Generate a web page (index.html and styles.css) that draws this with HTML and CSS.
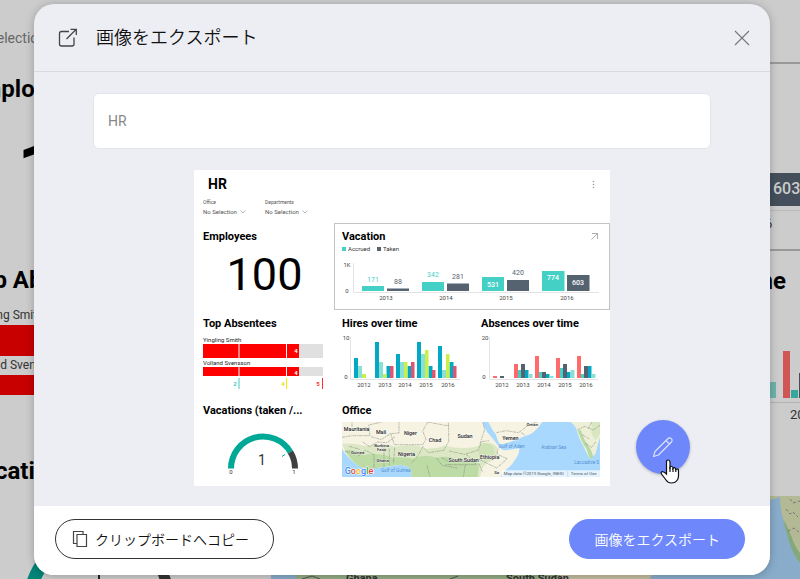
FILE: index.html
```html
<!DOCTYPE html>
<html lang="ja">
<head>
<meta charset="utf-8">
<meta name="viewport" content="width=device-width, initial-scale=1">
<title>画像をエクスポート</title>
<link rel="stylesheet" href="styles.css">
</head>
<body>
<div class="stage">
  <div class="backdrop" aria-hidden="true">
    <div class="back-left">
      <p class="back-filter">No Selection</p>
      <h2 class="back-title">Employees</h2>
      <p class="back-count">100</p>
      <h2 class="back-title">Top Absentees</h2>
      <p class="back-name">Yingling Smith</p>
      <div class="back-bar back-bar-tall"></div>
      <p class="back-name">Volland Svensson</p>
      <div class="back-bar"></div>
      <h2 class="back-title back-title-last">Vacations</h2>
      <svg class="back-gauge" viewBox="0 490 271 89" width="271" height="89">
        <path d="M30 600A69 69 0 0 1 159 568" fill="none" stroke="#008577" stroke-width="13"/>
        <path d="M158 574l10 -3 5 12h-12z" fill="#333"/>
        <path d="M99 574v8" stroke="#222" stroke-width="2"/>
      </svg>
    </div>
    <div class="back-right">
      <div class="back-vacation">
        <svg viewBox="740 64 60 185" width="60" height="185">
          <rect x="740" y="173" width="60" height="33" fill="#444f5b"/>
          <path d="M740 210.500H800" stroke="#bbb" stroke-width="1"/>
          <text x="773" y="194" font-size="16" font-weight="500" fill="#ccc">603</text>
          <text x="765" y="228" font-size="13" fill="#333">6</text>
        </svg>
      </div>
      <h2 class="back-title back-time">time</h2>
      <svg viewBox="740 294 60 201" width="60" height="201">
        <path d="M760 381h16v16h-16z" fill="#6db3aa"/>
        <path d="M783 350h7v47h-7z" fill="#d05555"/>
        <path d="M791 389h7v8h-7z" fill="#36a79f"/>
        <path d="M799 372h7v25h-7z" fill="#444f5b"/>
        <path d="M740 401.500H800" stroke="#b4b4b4"/>
        <text x="790" y="418" font-size="13" fill="#333">2016</text>
      </svg>
      <svg class="back-map" viewBox="271 495 529 84" preserveAspectRatio="xMaxYMax slice">
        <rect x="271" y="495" width="529" height="84" fill="#88acca"/>
        <path d="M298 579L294 574H650V579z" fill="#94ad85"/>
        <path d="M560 574h92l-3 5h-89z" fill="#c2bd9f"/>
        <path d="M770 495h11l-4 2-7 2zM780 495h20v67c-8-10-12-30-17-44c-2-8-3-15-3-23z" fill="#b4b995"/>
        <path d="M783 518c4 15 8 34 17 44v-10c-7-8-9-22-17-34z" fill="#85a87a"/>
        <path d="M786 508l4 5 3-2 5 5M788 530l6-3 6 5M790 498l3 4 7-2" fill="none" stroke="#777" stroke-dasharray="3 2"/>
        <path d="M302 578l10-3 8 3M450 578l8-3" fill="none" stroke="#555"/>
        <text x="346" y="581" font-size="11" font-weight="700" fill="#333">Ghana</text>
        <text x="506" y="581" font-size="11" font-weight="700" fill="#333">South Sudan</text>
      </svg>
    </div>
  </div>

  <main class="dialog" role="dialog" aria-labelledby="dialog-title">
    <header class="dialog-head">
      <svg class="export-icon" viewBox="0 0 20 20" width="20" height="20" fill="none" stroke="#444" stroke-width="1.300">
        <path d="M11 3.500H3.500q-2 0-2 2V16q0 2 2 2H14q2 0 2-2V9.500M8.500 11L18 1.500M12.500 1.300H18.300V7"/>
      </svg>
      <h1 id="dialog-title">画像をエクスポート</h1>
      <button class="close" type="button" aria-label="閉じる">
        <svg viewBox="0 0 16 16" width="16" height="16" stroke="#777" stroke-width="1.100"><path d="M1 1L15 15M15 1L1 15"/></svg>
      </button>
    </header>

    <section class="dialog-body">
      <input class="name" type="text" value="HR" aria-label="名前">
      <div class="preview-row">
        <article class="preview">
          <header class="dash-head">
            <div class="dash-top">
              <h2>HR</h2>
              <svg viewBox="0 0 3 9" width="3" height="9" fill="#999"><circle cx="1.500" cy="1.500" r=".8"/><circle cx="1.500" cy="4.500" r=".8"/><circle cx="1.500" cy="7.500" r=".8"/></svg>
            </div>
            <div class="filters">
              <div class="filter"><p>Office</p><p class="picked">No Selection <svg viewBox="0 0 6 4" width="6" height="4" fill="none" stroke="#999" stroke-width=".7"><path d="M.5 .5L3 3L5.500 .5"/></svg></p></div>
              <div class="filter"><p>Departments</p><p class="picked">No Selection <svg viewBox="0 0 6 4" width="6" height="4" fill="none" stroke="#999" stroke-width=".7"><path d="M.5 .5L3 3L5.500 .5"/></svg></p></div>
            </div>
          </header>
          <div class="widgets">
            <section class="widget">
              <h3>Employees</h3>
              <p class="count">100</p>
            </section>

            <section class="widget wide framed">
              <div class="widget-top">
                <h3>Vacation</h3>
                <svg viewBox="0 0 7 7" width="7" height="7" fill="none" stroke="#999" stroke-width=".8"><path d="M.5 6.500L6.500 .5M1 .5H6.500V6"/></svg>
              </div>
              <ul class="legend"><li class="accrued">Accrued</li><li class="taken">Taken</li></ul>
              <svg class="chart" viewBox="342 254 260 50">
                <path d="M353.500 262V291.500H599" fill="none" stroke="#e4e4e4"/>
                <g fill="#45d0c6"><path d="M362 285h22v5h-22zM422 281h22v9h-22zM482 276h22v14h-22zM542 270h22.500v20h-22.500z"/></g>
                <g fill="#556270"><path d="M387 287.500h22v2.500h-22zM447 282.500h22v7.500h-22zM507 279h22v11h-22zM567 274h22.500v16h-22.500z"/></g>
                <g font-size="7" text-anchor="middle" fill="#45d0c6"><text x="373" y="281">171</text><text x="433" y="276">342</text></g>
                <g font-size="7" text-anchor="middle" fill="#556270"><text x="398" y="283">88</text><text x="458" y="278">281</text><text x="518" y="274">420</text></g>
                <g font-size="7" font-weight="500" text-anchor="middle" fill="#fff"><text x="493" y="286">531</text><text x="553" y="279">774</text><text x="578" y="284">603</text></g>
                <g font-size="6" text-anchor="middle" fill="#444"><text x="347" y="266">1K</text><text x="347" y="292">0</text><text x="386" y="299">2013</text><text x="446" y="299">2014</text><text x="506" y="299">2015</text><text x="567" y="299">2016</text></g>
              </svg>
            </section>

            <section class="widget">
              <h3>Top Absentees</h3>
              <svg class="chart" viewBox="203 329 123 65">
                <path d="M203 344h120v14h-120zM203 367h120v9h-120z" fill="#e0e0e0"/>
                <path d="M203 344h96v14h-96zM203 367h96v9h-96z" fill="#f00"/>
                <path d="M239 344v32M286.500 344v32" stroke="#fff"/>
                <path d="M239 378v11" stroke="#45c9bf"/><path d="M286.500 378v11" stroke="#f1ee00"/><path d="M322.500 378v11" stroke="#ff3030"/>
                <g font-size="6" fill="#222"><text x="203" y="342">Yingling Smith</text><text x="203" y="365">Volland Svensson</text></g>
                <g font-size="6" font-weight="700" text-anchor="middle"><text x="296" y="353" fill="#fff">4</text><text x="296" y="375" fill="#fff">4</text><text x="235" y="386" fill="#45c9bf">2</text><text x="283" y="386" fill="#e4df00">4</text><text x="318" y="386" fill="#ff3030">5</text></g>
              </svg>
            </section>

            <section class="widget">
              <h3>Hires over time</h3>
              <svg class="chart" viewBox="342 329 123 65">
                <path d="M350.500 337V379.500H460" fill="none" stroke="#e4e4e4"/>
                <g fill="#03a8c5"><path d="M354 358h4v20h-4zM375 342h4v36h-4zM396 354h4v24h-4zM417 342h4v36h-4zM438 346h4v32h-4z"/><path d="M386.500 366h4v12h-4zM407.500 366h4v12h-4zM428.500 366h4v12h-4zM449.500 362h4v16h-4z"/></g>
                <path d="M358 366h4v12h-4zM379 362h4v16h-4zM400 362h4v16h-4zM421 354h4v24h-4zM442 370h4v8h-4z" fill="#8be0d6"/>
                <path d="M362 374h4v4h-4zM383 374h3.500v4h-3.500zM404 362h3.500v16h-3.500zM425 350h3.500v28h-3.500zM446 354h3.500v24h-3.500z" fill="#c8f04b"/>
                <path d="M390 366h3.500v12h-3.500zM411 362h3.500v16h-3.500zM432 370h3.500v8h-3.500zM453 366h3.500v12h-3.500z" fill="#dc5573"/>
                <g font-size="6" text-anchor="middle" fill="#444"><text x="346" y="340">10</text><text x="346" y="379">0</text><text x="364" y="387">2012</text><text x="385" y="387">2013</text><text x="405" y="387">2014</text><text x="426" y="387">2015</text><text x="448" y="387">2016</text></g>
              </svg>
            </section>

            <section class="widget">
              <h3>Absences over time</h3>
              <svg class="chart" viewBox="481 329 121 65">
                <path d="M489.500 337V379.500H598" fill="none" stroke="#e4e4e4"/>
                <path d="M493 376h4v2h-4zM514 364h4v14h-4zM535 356h4v22h-4zM556 358h4v20h-4zM577 356h4v22h-4z" fill="#ff6b6b"/>
                <path d="M518 370h3.500v8h-3.500zM539 372h3.500v6h-3.500zM560 368h3.500v10h-3.500zM581 374h3.500v4h-3.500z" fill="#45d0c6"/>
                <path d="M500 376h4v2h-4zM521 364h4v14h-4zM542 372h4v6h-4zM563 364h4v14h-4zM584 366h4v12h-4z" fill="#556270"/>
                <path d="M525 370h3.500v8h-3.500zM546 374h3.500v4h-3.500zM567 372h3.500v6h-3.500zM588 366h3.500v12h-3.500z" fill="#03a8c5"/>
                <path d="M528.500 374h4v4h-4zM549.500 376h4v2h-4zM570.500 370h4v8h-4zM591.500 374h4v4h-4z" fill="#8be0d6"/>
                <g font-size="6" text-anchor="middle" fill="#444"><text x="485" y="340">20</text><text x="484" y="379">0</text><text x="502" y="387">2012</text><text x="523" y="387">2013</text><text x="544" y="387">2014</text><text x="565" y="387">2015</text><text x="586" y="387">2016</text></g>
              </svg>
            </section>

            <section class="widget">
              <h3>Vacations (taken /...</h3>
              <svg class="chart" viewBox="203 416 123 64">
                <path d="M231 468.500A32 32 0 0 1 290.400 452" fill="none" stroke="#00a896" stroke-width="6"/>
                <path d="M290.400 452A32 32 0 0 1 295 468.500" fill="none" stroke="#404040" stroke-width="6"/>
                <path d="M282 456.500l3-2" stroke="#00a896"/>
                <g text-anchor="middle" fill="#333"><text x="262" y="465" font-size="14">1</text><text x="231" y="474" font-size="6">0</text><text x="294" y="474" font-size="6">1</text></g>
              </svg>
            </section>

            <section class="widget wide map">
              <h3>Office</h3>
              <svg class="chart" viewBox="21 66 774 165">
                <rect x="21" y="66" width="774" height="165" fill="#a9d8ff"/>
                <path d="M21 66H443Q448 85 456 96L470 112Q481 126 491 139Q498 150 510 151L553 145Q553 162 542 177Q530 198 509 212L497 231H231L227 206Q212 194 195 194L165 199Q130 203 103 207Q75 203 58 188L39 171Q29 160 21 146z" fill="#f7f3e3"/>
                <path d="M21 132Q50 128 90 138Q150 126 180 140Q240 128 265 145Q300 148 330 137Q380 150 435 138Q465 120 484 139Q491 160 478 180Q455 185 440 207L435 231H231L227 206Q212 194 195 194L103 207Q75 203 58 188L39 171z" fill="#dce8c5"/>
                <path d="M28 151Q60 145 84 165Q130 157 173 173Q202 170 236 176Q270 159 303 174Q340 164 366 180Q410 174 432 192L428 231H231L227 206Q212 194 195 194L103 207Q75 203 58 188z" fill="#bddba5"/>
                <path d="M430 137Q450 118 474 139L480 171Q459 190 432 178z" fill="#cfe2b6"/>
                <path d="M460 66H622Q615 78 605 87Q590 104 570 108Q548 119 523 127L495 134Q486 118 483 104Q470 88 460 66z" fill="#f7f3e3"/>
                <path d="M707 66H795V112Q787 139 782 160Q775 170 765 177Q752 157 744 136Q730 114 724 86Q716 72 707 66z" fill="#edf0d7"/>
                <path d="M728 91Q739 125 755 148L765 177L775 170L766 146Q746 120 738 91z" fill="#b7d9a4"/>
                <path d="M770 66L795 66V101L782 121L769 101z" fill="#d8e6c1"/>
                <path d="M21 112L51 107H105L101 75L140 66M51 80V66M108 110L139 119L166 101L192 99V66M83 126L104 140L126 126L157 128L181 109M167 101L178 134H263L273 118L263 93L278 66M179 143L175 190M265 138L250 166L229 190M278 66L341 78V125L326 151L280 158L265 143M342 153L389 163L429 151L440 125L462 122M340 78V66M435 131L449 88L443 66M394 163L424 194H330M391 194L385 231M276 196L285 231M304 173L321 196L367 204M432 178L485 204L517 176L486 163L489 143M69 169L91 151L117 164L117 205M147 142L147 200M163 146V195M43 139L74 148M30 155L60 158M484 98L513 92L551 98L579 76L606 66M559 98L570 106M728 89L750 79L775 90L795 76M751 130L770 142L782 126M742 104L763 117M770 66L760 86M320 173L342 185M432 191L443 217" fill="none" stroke="#7e8078" stroke-width="1.500" stroke-dasharray="9 2 4 2"/>
                <path d="M500 211H795V231H500z" fill="#fff" fill-opacity=".68"/>
                <path d="M698 213v16" stroke="#a5acb4"/>
                <g class="map-places"><text x="65" y="93">Mauritania</text><text x="138" y="102">Mali</text><text x="226" y="105">Niger</text><text x="300" y="125">Chad</text><text x="390" y="114">Sudan</text><text x="526" y="119">Yemen</text><text x="592" y="79" class="map-minor">Oman</text><text x="215" y="168">Nigeria</text><text x="386" y="186">South Sudan</text><text x="464" y="177">Ethiopia</text></g>
                <g class="map-places map-minor"><text x="68" y="162">Guinea</text><text x="140" y="141">Burkina</text><text x="140" y="153">Faso</text><text x="143" y="187">Ghana</text><text x="485" y="221">So</text></g>
                <g class="map-seas"><text x="182" y="215">Gulf of Guinea</text><text x="530" y="145">Gulf of Aden</text><text x="656" y="147">Arabian Sea</text><text x="755" y="193">Laccadive S</text></g>
                <text class="map-logo" x="29" y="221"><tspan fill="#4285f4">G</tspan><tspan fill="#ea4335">o</tspan><tspan fill="#fbbc05">o</tspan><tspan fill="#4285f4">g</tspan><tspan fill="#34a853">l</tspan><tspan fill="#ea4335">e</tspan></text>
                <g class="map-credit"><text x="596" y="225">Map data ©2019 Google, INEGI</text><text x="746" y="225">Terms of Use</text></g>
              </svg>
            </section>
          </div>
        </article>

        <div class="edit-wrap">
          <button class="edit" type="button" aria-label="編集">
            <svg viewBox="0 0 22 22" width="22" height="22" fill="none" stroke="#dfe4ff" stroke-width="1.100" stroke-linejoin="round"><path d="M1.500 20.500L3 15.500L15.500 3Q17.500 1 19.300 2.700T19 6.500L6.500 19zM14 4.500L17.500 8"/></svg>
          </button>
          <svg class="pointer" viewBox="0 0 20 25" width="20" height="25"><path d="M6.500 15V3Q6.500 1 8.200 1T10 3V8.500Q11.500 6 13 8.500V9.500Q14.500 7.500 15.800 10V10.500Q18.500 9 18.500 12V17Q18.500 20 16.500 22Q15 24 11.500 24Q8 24 6 21L1.500 15Q.5 13 2.300 12.600Q4 12.500 6.500 15z" fill="#fff" stroke="#111" stroke-width="1.200"/><path d="M10 8v5M13 9v4M15.800 10v3" stroke="#111" stroke-width="1.200"/></svg>
        </div>
      </div>
    </section>

    <footer class="dialog-foot">
      <button class="pill copy" type="button">
        <svg viewBox="0 0 16 18" width="16" height="18" fill="none" stroke="#444" stroke-width="1.200"><path d="M5 13.500H1.500V1.500H11V4.500M5 4.500H14.500V16.500H5z"/></svg>
        クリップボードへコピー
      </button>
      <button class="pill primary" type="button">画像をエクスポート</button>
    </footer>
  </main>
</div>
</body>
</html>
```
FILE: styles.css
```css
* { box-sizing: border-box; }
body, h1, h2, h3, p, ul { margin: 0; padding: 0; }
body {
  background: #ccc;
  color: #333;
  font-family: Roboto, "Noto Sans CJK JP", sans-serif;
}
svg { display: block; flex: none; }
button, input { font: inherit; color: inherit; }

/* The dashboard and the dialog share one grid cell */
.stage {
  display: grid;
  height: 100vh;
  overflow: hidden;
}
.backdrop, .dialog { grid-area: 1 / 1; min-width: 0; }

.backdrop {
  display: grid;
  grid-template-columns: 271px 1fr;
  overflow: hidden;
  height: 100vh;
}
.back-left { padding-top: 28px; }
.back-left p, .back-left h2 { margin-left: -33px; white-space: nowrap; }
.back-filter { font-size: 14px; line-height: 20px; color: #666; }
.back-title { font-size: 24px; line-height: 28px; font-weight: 700; color: #000; }
.back-filter + .back-title { margin-top: 27px; }
.back-count { font-size: 102px; line-height: 120px; margin-top: 15px; margin-bottom: 28px; padding-left: 48px; color: #000; }
.back-name { font-size: 12px; line-height: 19px; margin-top: 12px; }
.back-bar { height: 20px; background: #c80000; }
.back-bar-tall { height: 31px; }
.back-bar + .back-name { margin-top: 0; }
.back-title-last { margin-top: 62px; }
.back-gauge { margin-top: 6px; }
.back-right { display: flex; flex-direction: column; align-items: flex-end; padding-top: 62px; }
.back-vacation {
  display: flex;
  justify-content: flex-end;
  width: 100%;
  border: solid #999;
  border-width: 2px 0;
}
.back-time { margin-top: 16px; margin-right: 14px; }
.back-map { width: 100%; height: 84px; }

.dialog {
  display: flex;
  flex-direction: column;
  align-self: start;
  margin: 4px 30px 4px 34px;
  border-radius: 20px;
  background: #edeef4;
  box-shadow: 0 1px 8px rgba(0, 0, 0, .25);
  overflow: hidden;
  z-index: 1;
}
.dialog-head {
  display: flex;
  align-items: center;
  height: 68px;
  padding: 0 18px 0 24px;
  border-bottom: 1px solid #d9dae0;
}
.dialog-head h1 {
  margin-left: 18px;
  color: #111;
  font-size: 18px;
  line-height: 24px;
  font-weight: 350;
}
.close {
  margin-left: auto;
  padding: 2px;
  border: 0;
  background: none;
}
.dialog-body { padding: 21px 59px 20px; }
.name {
  display: block;
  width: 100%;
  height: 56px;
  padding: 0 14px;
  border: 1px solid #e4e5eb;
  border-radius: 6px;
  background: #fff;
  color: #888;
  font-size: 14px;
}
.preview-row {
  display: grid;
  grid-template-columns: 1fr minmax(0, 416px) 1fr;
  margin-top: 21px;
}
.preview { grid-column: 2; background: #fff; }
.edit-wrap {
  position: relative;
  align-self: end;
  justify-self: start;
  margin: 0 0 12px 26px;
}
.edit {
  display: grid;
  place-items: center;
  width: 54px;
  height: 54px;
  padding: 0;
  border: 0;
  border-radius: 50%;
  background: #6e88fb;
  box-shadow: 0 1px 3px rgba(0, 0, 0, .25);
}
.pointer { position: absolute; right: 10px; bottom: -10px; }

.dash-head { height: 53px; padding: 5px 15px 0 9px; }
.dash-top { display: flex; align-items: center; justify-content: space-between; padding-left: 5px; }
.dash-top h2 { font-size: 14px; line-height: 18px; color: #000; }
.filters { display: flex; margin-top: 5px; color: #555; line-height: 9px; }
.filter { width: 62px; font-size: 5px; }
.filter .picked { display: flex; align-items: center; gap: 3px; font-size: 6px; }

.widgets {
  display: grid;
  grid-template-columns: 139fr 139fr 137fr;
  grid-template-rows: 87px 87px 89px;
  padding-left: 1px;
}
.widget { min-width: 0; padding: 7px 8px 0; }
.widget h3 {
  padding-top: 1px;
  font-size: 11px;
  line-height: 12px;
  font-weight: 700;
  color: #000;
  white-space: nowrap;
}
.wide { grid-column: span 2; }
.framed { padding: 6px 7px 0; border: 1px solid #c4c4c4; }
.map { padding-right: 10px; }
.map .chart { margin-top: 5px; }
.widget-top { display: flex; justify-content: space-between; align-items: center; padding-right: 4px; }
.count { font-size: 45px; line-height: 64px; text-align: center; color: #000; }
.chart { width: 100%; height: auto; }
.widget > h3 + .chart { margin-top: -1px; }
.map > h3 + .chart { margin-top: 5px; }
.legend { display: flex; gap: 7px; list-style: none; font-size: 6px; line-height: 12px; }
.legend li { display: flex; align-items: center; gap: 2px; }
.legend li::before { content: ""; width: 4px; height: 4px; background: #45d0c6; }
.legend .taken::before { background: #556270; }

.map-places, .map-seas, .map-credit { text-anchor: middle; }
.map-places { font-size: 16px; font-weight: 500; fill: #222; stroke: #fff; stroke-width: 2px; paint-order: stroke; }
.map-minor { font-size: 13px; }
.map-seas { font-size: 14px; fill: #5590cf; }
.map-logo { font-size: 27px; font-weight: 500; stroke: #fff; stroke-width: 3px; paint-order: stroke; }
.map-credit { font-size: 13px; fill: #555; }

.dialog-foot {
  display: flex;
  justify-content: space-between;
  padding: 13px 25px 16px 21px;
  background: #fff;
}
.pill {
  display: flex;
  align-items: center;
  gap: 7px;
  height: 40px;
  padding: 0 24px;
  border: 1px solid #333;
  border-radius: 20px;
  background: #fff;
  color: #111;
  font-size: 14px;
  font-weight: 350;
}
.copy { padding: 0 24px 0 16px; }
.primary { border-color: #6e88fb; background: #6e88fb; color: #fff; }
```
